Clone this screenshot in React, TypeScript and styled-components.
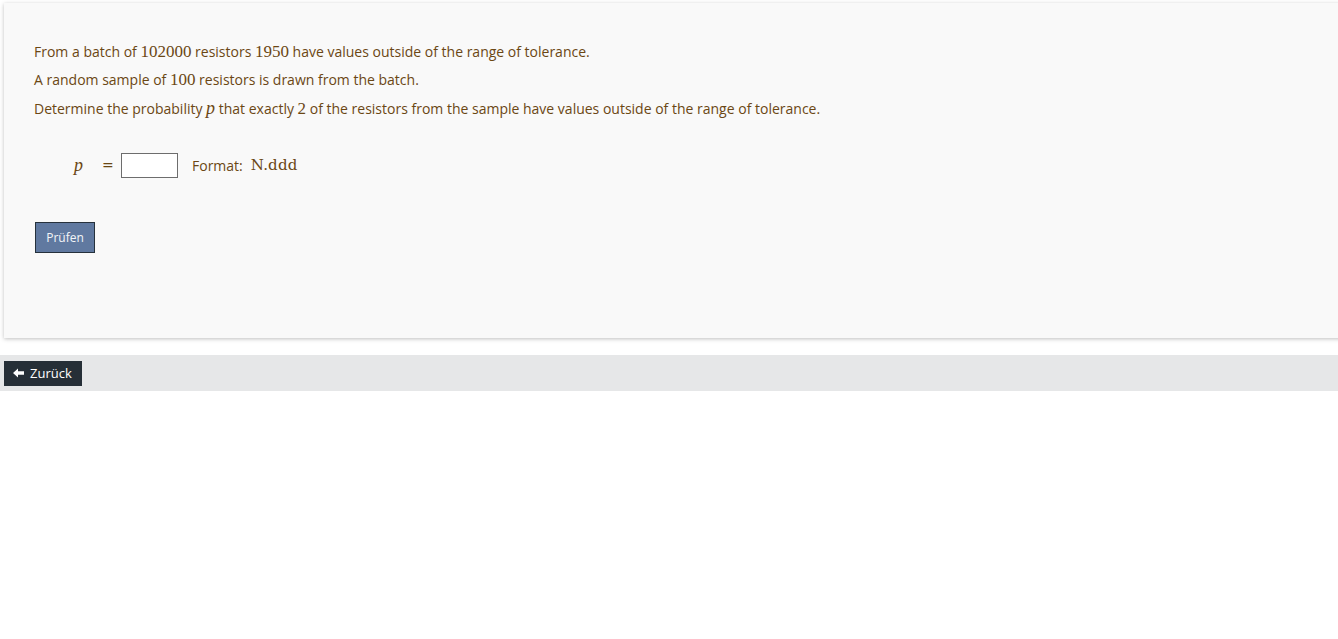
import React from "react";
import styled, { createGlobalStyle } from "styled-components";

const Global = createGlobalStyle`
  html, body { margin: 0; padding: 0; background: #fff; overflow-x: hidden; }
  body { font-family: "Open Sans", "Liberation Sans", sans-serif; }
`;

const Page = styled.div`
  display: flex;
  flex-direction: column;
  padding-top: 3px;
`;

const Card = styled.section`
  margin-left: 4px;
  margin-right: -10px;
  background: #f9f9f9;
  box-shadow: 0 1px 4px rgba(0, 0, 0, 0.25);
  padding: 35px 30px 0 30px;
  height: 335px;
  box-sizing: border-box;
  color: #6b4714;
  font-size: 14px;
`;

const Line = styled.p`
  margin: 0;
  height: 28px;
  line-height: 28px;
  white-space: nowrap;
`;

const M = styled.span<{ $italic?: boolean }>`
  font-family: "Liberation Serif", serif;
  font-size: ${(p) => (p.$italic ? "18px" : "17px")};
  font-style: ${(p) => (p.$italic ? "italic" : "normal")};
`;

const AnswerRow = styled.div`
  display: flex;
  align-items: center;
  margin-top: 30px;
  padding-left: 40px;
  height: 26px;
`;

const Var = styled.span`
  font-family: "Liberation Serif", serif;
  font-style: italic;
  font-size: 18px;
  width: 28px;
`;

const Eq = styled.span`
  font-family: "DejaVu Sans", sans-serif;
  font-size: 14px;
  width: 19px;
`;

const Input = styled.input`
  width: 57px;
  height: 25px;
  box-sizing: border-box;
  border: 1px solid #6d6d6d;
  background: #fff;
  margin: 0 14px 0 0;
  padding: 0 4px;
`;

const FormatLabel = styled.span`
  font-size: 14px;
  margin-right: 8px;
`;

const FormatCode = styled.span`
  font-family: "DejaVu Serif", serif;
  font-size: 15px;
  letter-spacing: 0.2px;
`;

const CheckButton = styled.button`
  margin-top: 44px;
  margin-left: 1px;
  width: 60px;
  height: 31px;
  background: #6079a0;
  border: 1px solid #26313c;
  color: #f3f5f8;
  font-family: "Open Sans", sans-serif;
  font-size: 12px;
  padding: 0;
  cursor: pointer;
`;

const Bar = styled.nav`
  margin-top: 17px;
  background: #e6e7e8;
  height: 36px;
  display: flex;
  align-items: center;
  padding-left: 4px;
`;

const BackButton = styled.button`
  display: flex;
  align-items: center;
  gap: 6px;
  height: 25px;
  width: 78px;
  padding: 0 0 0 9px;
  box-sizing: border-box;
  background: #262f37;
  color: #fff;
  border: none;
  font-family: "Open Sans", sans-serif;
  font-size: 13px;
  cursor: pointer;
`;

export default function App() {
  return (
    <Page>
      <Global />
      <Card>
        <Line>
          From a batch of <M>102000</M> resistors <M>1950</M> have values outside of the range of tolerance.
        </Line>
        <Line>
          A random sample of <M>100</M> resistors is drawn from the batch.
        </Line>
        <Line>
          Determine the probability <M $italic>p</M> that exactly <M>2</M> of the resistors from the sample have values outside of the range of tolerance.
        </Line>
        <AnswerRow>
          <Var>p</Var>
          <Eq>=</Eq>
          <Input type="text" />
          <FormatLabel>Format:</FormatLabel>
          <FormatCode>N.ddd</FormatCode>
        </AnswerRow>
        <CheckButton>Prüfen</CheckButton>
      </Card>
      <Bar>
        <BackButton>
          <svg width="11" height="10" viewBox="0 0 11 10">
            <path d="M0 5 L5 0.5 L5 3.3 L11 3.3 L11 6.7 L5 6.7 L5 9.5 Z" fill="#fff" />
          </svg>
          Zurück
        </BackButton>
      </Bar>
    </Page>
  );
}
